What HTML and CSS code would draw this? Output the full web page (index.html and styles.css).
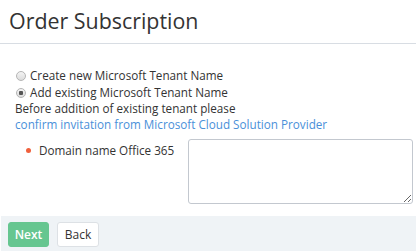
FILE: index.html
```html
<!DOCTYPE html>
<html lang="en">
<head>
  <meta charset="UTF-8">
  <title>Order Subscription</title>
  <link rel="stylesheet" href="styles.css">
</head>
<body>
  <div class="page">
    <h1 class="title">Order Subscription</h1>

    <div class="content">
      <label class="radio-row">
        <input type="radio" name="tenant"> Create new Microsoft Tenant Name
      </label>
      <label class="radio-row">
        <input type="radio" name="tenant" checked> Add existing Microsoft Tenant Name
      </label>
      <div class="note">Before addition of existing tenant please</div>
      <a class="link" href="#">confirm invitation from Microsoft Cloud Solution Provider</a>

      <div class="field">
        <div class="field-label"><span class="req"></span>Domain name Office 365</div>
        <textarea class="field-input"></textarea>
      </div>
    </div>

    <div class="footer">
      <button class="btn btn-primary">Next</button>
      <button class="btn">Back</button>
    </div>
  </div>
</body>
</html>
```

FILE: styles.css
```css
body {
  margin: 0;
  font-family: "Open Sans", Arial, sans-serif;
  color: #333;
  background: #fff;
}
.page {
  width: 416px;
  height: 251px;
  display: flex;
  flex-direction: column;
}
.title {
  margin: 0;
  padding: 6px 9px 0;
  height: 37px;
  font-size: 21.4px;
  font-weight: 400;
  line-height: 30px;
  border-bottom: 1px solid #d8dde3;
}
.content {
  flex: 1;
  padding: 23px 3px 0 15px;
  font-size: 11.7px;
}
.radio-row {
  display: flex;
  align-items: center;
  height: 17px;
  line-height: 17px;
}
.radio-row input {
  appearance: none;
  margin: 0 4px 0 1px;
  width: 10px;
  height: 10px;
  border: 1px solid #b5b5b5;
  border-radius: 50%;
  background: linear-gradient(#f4f4f4, #dcdcdc);
  box-sizing: border-box;
}
.radio-row input:checked {
  background: radial-gradient(circle, #555 0 2px, transparent 2.5px), linear-gradient(#f4f4f4, #dcdcdc);
}
.note {
  line-height: 15px;
}
.link {
  display: block;
  color: #4a90d9;
  text-decoration: none;
  line-height: 16px;
}
.field {
  display: flex;
  margin-top: 7px;
}
.field-label {
  width: 173px;
  flex-shrink: 0;
  padding: 3px 0 0 11px;
  box-sizing: border-box;
  display: flex;
  align-items: flex-start;
  line-height: 17px;
}
.req {
  width: 5px;
  height: 5px;
  border-radius: 50%;
  background: #f0603c;
  margin: 6px 8px 0 0;
  flex-shrink: 0;
}
.field-input {
  width: 225px;
  height: 65px;
  flex-shrink: 0;
  box-sizing: border-box;
  border: 1px solid #c3c8cf;
  border-radius: 3px;
  margin: 0;
  font-family: inherit;
}
.footer {
  height: 35px;
  background: #eff3f6;
  margin-left: 1px;
  padding: 6px 7px 0;
  box-sizing: border-box;
  display: flex;
  gap: 8px;
  align-items: flex-start;
}
.btn {
  height: 25px;
  padding: 0;
  font-family: inherit;
  font-size: 12px;
  border: 1px solid #dde1e5;
  border-radius: 3px;
  background: #fff;
  color: #333;
}
.btn-primary {
  width: 41px;
  background: #66c690;
  border-color: #66c690;
  color: #fff;
  font-weight: 600;
}
.btn + .btn {
  width: 42px;
}
```
